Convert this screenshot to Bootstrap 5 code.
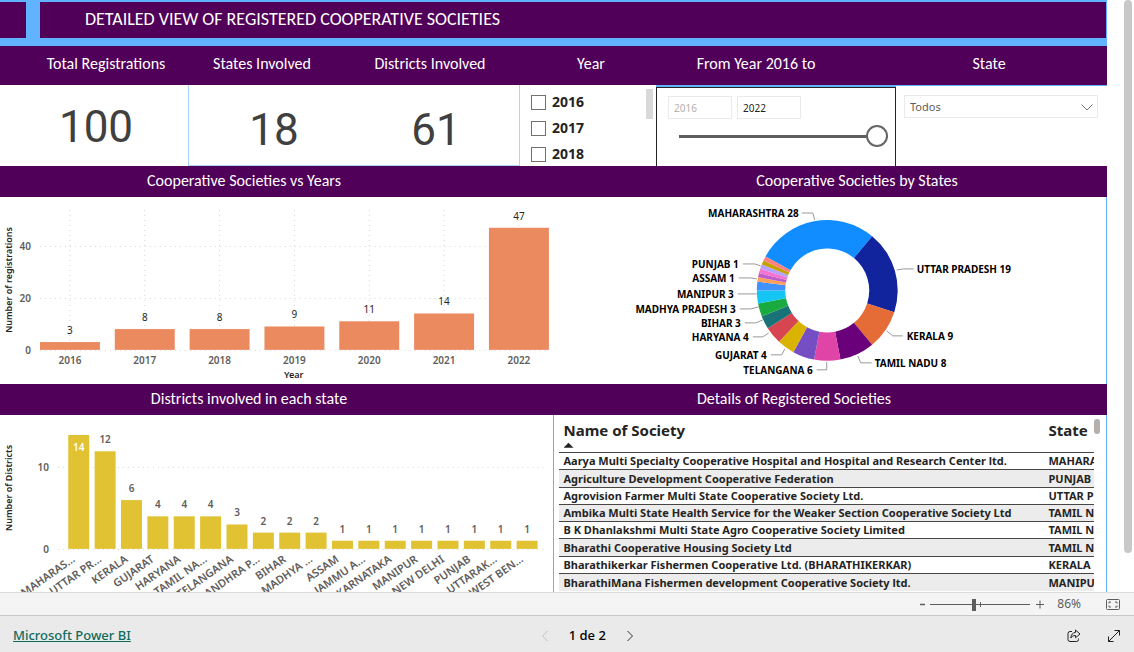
<!DOCTYPE html>
<html lang="es">
<head>
<meta charset="utf-8">
<meta name="viewport" content="width=device-width, initial-scale=1">
<title>Registered Cooperative Societies</title>
<link href="https://cdn.jsdelivr.net/npm/bootstrap@5.3.0/dist/css/bootstrap.min.css" rel="stylesheet">
<style>
  :root { --plum: #500059; --sky: #61b2ff; --ink: #252423; --soft: #605e5c; }
  body { font-family: "Noto Sans", "Open Sans", sans-serif; font-size: 13px; color: var(--ink); background: #fff; }
  .report { padding-right: 27px; }
  .report-scroll { top: 0; right: 2px; width: 8px; height: 553px; background: #c8c8c8; border-radius: 4px; }
  .head-font { font-family: Carlito, Lato, sans-serif; color: #fff; font-weight: 400; line-height: 20px; white-space: nowrap; }

  .title-bar { background: var(--sky); height: 46px; padding: 2px 1px 8px 0; gap: 14px; }
  .title-bar .corner { width: 26px; background: var(--plum); }
  .title-bar h1 { background: var(--plum); font-size: 18px; margin: 0; padding: 7px 45px; }

  .labels, .filters, .band { display: grid; }
  .labels { grid-template-columns: 212fr 100fr 236fr 86fr 244fr 222fr 7fr; background: var(--plum); height: 39px; }
  .labels h2, .band h2 { font-size: 16px; margin: 0; display: flex; justify-content: center; }
  .labels h2 { padding-top: 8px; min-width: 0; }
  .band { background: var(--plum); height: 31px; }
  .band h2 { padding-top: 5px; }
  .band-a { grid-template-columns: 488fr 119fr 500fr; }
  .band-b { grid-template-columns: 498fr 592fr 17fr; }

  .filters { grid-template-columns: 188fr 332fr 136fr 240fr 211fr; height: 81px; }
  .kpi { font-family: Roboto, sans-serif; font-size: 44px; line-height: 44px; color: #404040; }
  .kpi-single { padding: 20px 0 0 4px; }
  .kpi-pair { border: 1px solid #a9d3f9; border-top: 0; padding: 23px 2px 0 4px; }
  .year-list { padding: 6px 3px 0 11px; }
  .year-list label { font-size: 14px; font-weight: 700; line-height: 22px; }
  .year-list .form-check-input { width: 15px; height: 15px; border: 1px solid #77716c; border-radius: 0; margin: 0 6px 0 0; }
  .list-thumb { width: 7px; height: 30px; background: #d9d9d9; margin-top: -2px; }
  .range-box { border-top: 2px solid var(--sky); }
  .range-inner { border: 1px solid #252423; border-bottom: 0; height: 79px; padding: 8px 7px 0 11px; }
  .range-inner .year-box { width: 64px; height: 23px; border: 1px solid #eaeaea; border-radius: 0; font-size: 10px; padding: 0 5px; color: var(--ink); }
  .range-inner .year-box:disabled { background: #fff; color: #b3b0ad; }
  .range-inner .span-slider { margin: 6px 0 0 11px; width: calc(100% - 11px); height: 22px; appearance: none; background: none; display: block; }
  .span-slider::-webkit-slider-runnable-track { height: 3px; background: #605e5c; }
  .span-slider::-webkit-slider-thumb { appearance: none; width: 22px; height: 22px; margin-top: -10px; border: 2px solid #666; border-radius: 50%; background: #fff; }
  .state-box { padding: 9px 9px 0 8px; border-top: 1px solid var(--sky); }
  .state-box .form-select { height: 23px; border: 1px solid #eaeaea; border-radius: 0; padding: 0 24px 0 5px; font-size: 11px; line-height: 20px; color: var(--soft);
    background-image: url("data:image/svg+xml,%3Csvg xmlns='http://www.w3.org/2000/svg' viewBox='0 0 12 12'%3E%3Cpath d='M.5 3.5 6 9l5.500-5.500' fill='none' stroke='%23777'/%3E%3C/svg%3E"); background-size: 12px; background-position: right 4px center; }

  .split { display: grid; grid-template-columns: 550fr 557fr; }
  .edge { border-right: 1px solid var(--sky); }
  svg text { font-family: "Noto Sans", "Open Sans", sans-serif; }
  .chart { display: block; width: 100%; }
  .grid-line { stroke: #d4d4d4; stroke-dasharray: 1 4; }
  .tick { font-size: 10px; font-weight: 600; fill: var(--soft); }
  .slant { font-size: 11px; font-weight: 600; fill: var(--soft); }
  .value { font-size: 10px; fill: var(--ink); }
  .axis-name { font-size: 9px; font-weight: 600; fill: var(--ink); }
  .slice-name { font-size: 10px; font-weight: 700; fill: #000; }

  .table-pane { margin-left: 3px; border-left: 1px solid var(--sky); padding: 0 12px 0 5px; height: 177px; overflow: hidden; }
  .table-clip { overflow: hidden; }
  .societies { table-layout: fixed; width: 620px; font-size: 11px; font-weight: 700; line-height: 16px; white-space: nowrap; border-collapse: collapse; }
  .societies col.name-col { width: 485px; }
  .societies th { font-size: 15px; font-weight: 700; line-height: 20px; height: 38px; padding: 5px 5px 0; vertical-align: top; }
  .societies td { padding: 0 5px; }
  .societies tbody tr { height: 17px; border-top: 1px solid #484644; }
  .societies tbody tr:nth-child(4n+2) { height: 18px; }
  .societies tbody tr:nth-child(even) { background: #ececec; }
  .sort-mark { display: block; width: 10px; height: 5px; background: var(--ink); clip-path: polygon(50% 0, 100% 100%, 0 100%); margin-top: 3px; }
  .pane-thumb { top: 4px; right: 6px; width: 6px; height: 15px; border-radius: 3px; background: #b3b0ad; }

  .zoom-bar { height: 24px; background: #f4f4f4; border-top: 1px solid #dcdcdc; border-bottom: 1px solid #c8c8c8; padding-right: 14px; color: var(--soft); }
  .plain-btn { border: 0; background: none; padding: 0; color: inherit; line-height: 16px; display: inline-flex; align-items: center; justify-content: center; }
  .zoom-slider { appearance: none; width: 100px; height: 12px; margin: 0 6px 0 4px; background: linear-gradient(#605e5c, #605e5c) 50px 50% / 1px 5px no-repeat; }
  .zoom-slider::-webkit-slider-runnable-track { height: 1px; background: #605e5c; }
  .zoom-slider::-webkit-slider-thumb { appearance: none; width: 4px; height: 12px; margin-top: -5px; border: 0; border-radius: 0; background: #605e5c; }
  .zoom-pct { font-size: 12px; margin: 0 25px 0 13px; }
  .foot { display: grid; grid-template-columns: 13fr auto 12fr; height: 36px; background: #eaeaea; padding: 0 13px; align-items: center; }
  .foot a { font-size: 13px; font-weight: 500; color: #0f6b5c; text-decoration: underline; }
  .foot .page-no { font-size: 13px; font-weight: 500; color: #000; }
</style>
</head>
<body class="d-flex flex-column vh-100 overflow-hidden">
<main class="report position-relative flex-grow-1 overflow-hidden">
  <header class="title-bar d-flex">
    <div class="corner"></div>
    <h1 class="head-font flex-grow-1">DETAILED VIEW OF REGISTERED COOPERATIVE SOCIETIES</h1>
  </header>

  <section class="labels">
    <h2 class="head-font">Total Registrations</h2>
    <h2 class="head-font">States Involved</h2>
    <h2 class="head-font">Districts Involved</h2>
    <h2 class="head-font">Year</h2>
    <h2 class="head-font">From Year 2016 to</h2>
    <h2 class="head-font">State</h2>
  </section>

  <section class="filters">
    <div class="kpi kpi-single text-center">100</div>
    <div class="kpi kpi-pair row g-0 text-center"><div class="col-6">18</div><div class="col-6">61</div></div>
    <div class="year-list d-flex justify-content-between">
      <div class="d-flex flex-column gap-1">
        <div class="d-flex align-items-center"><input class="form-check-input" type="checkbox" id="y16"><label for="y16">2016</label></div>
        <div class="d-flex align-items-center"><input class="form-check-input" type="checkbox" id="y17"><label for="y17">2017</label></div>
        <div class="d-flex align-items-center"><input class="form-check-input" type="checkbox" id="y18"><label for="y18">2018</label></div>
      </div>
      <div class="list-thumb"></div>
    </div>
    <div class="range-box">
      <div class="range-inner">
        <div class="d-flex" style="gap:5px">
          <input class="year-box" type="text" value="2016" aria-label="From year" disabled>
          <input class="year-box" type="text" value="2022" aria-label="To year">
        </div>
        <input class="span-slider" type="range" min="2016" max="2022" value="2022" aria-label="Last year">
      </div>
    </div>
    <div class="state-box">
      <select class="form-select" aria-label="State"><option>Todos</option></select>
    </div>
  </section>

  <section class="band band-a">
    <h2 class="head-font">Cooperative Societies vs Years</h2><span></span>
    <h2 class="head-font">Cooperative Societies by States</h2>
  </section>
  <section class="split edge">
    <svg class="chart" id="years" viewBox="0 197 550 187" role="img" aria-label="Cooperative Societies vs Years"></svg>
    <svg class="chart" id="states" viewBox="550 197 557 187" role="img" aria-label="Cooperative Societies by States"></svg>
  </section>

  <section class="band band-b">
    <h2 class="head-font">Districts involved in each state</h2>
    <h2 class="head-font">Details of Registered Societies</h2>
  </section>
  <section class="split edge">
    <svg class="chart" id="districts" viewBox="0 415 550 177" role="img" aria-label="Districts involved in each state"></svg>
    <div class="table-pane position-relative">
      <div class="table-clip">
        <table class="societies">
          <colgroup><col class="name-col"><col></colgroup>
          <thead><tr><th>Name of Society<span class="sort-mark"></span></th><th>State</th></tr></thead>
          <tbody>
            <tr><td>Aarya Multi Specialty Cooperative Hospital and Hospital and Research Center ltd.</td><td>MAHARASHTRA</td></tr>
            <tr><td>Agriculture Development Cooperative Federation</td><td>PUNJAB</td></tr>
            <tr><td>Agrovision Farmer Multi State Cooperative Society Ltd.</td><td>UTTAR PRADESH</td></tr>
            <tr><td>Ambika Multi State Health Service for the Weaker Section Cooperative Society Ltd</td><td>TAMIL NADU</td></tr>
            <tr><td>B K Dhanlakshmi Multi State Agro Cooperative Society Limited</td><td>TAMIL NADU</td></tr>
            <tr><td>Bharathi Cooperative Housing Society Ltd</td><td>TAMIL NADU</td></tr>
            <tr><td>Bharathikerkar Fishermen Cooperative Ltd. (BHARATHIKERKAR)</td><td>KERALA</td></tr>
            <tr><td>BharathiMana Fishermen development Cooperative Society ltd.</td><td>MANIPUR</td></tr>
          </tbody>
        </table>
      </div>
      <div class="pane-thumb position-absolute"></div>
    </div>
  </section>
  <div class="report-scroll position-absolute"></div>
</main>

<div class="zoom-bar d-flex align-items-center justify-content-end flex-shrink-0">
  <button class="plain-btn" type="button" aria-label="Zoom out"><svg width="6" height="12"><path d="M0 6.500h5" stroke="#605e5c" stroke-width="1.500"/></svg></button>
  <input class="zoom-slider" type="range" min="0" max="100" value="43" aria-label="Zoom">
  <button class="plain-btn" type="button" aria-label="Zoom in"><svg width="8" height="12"><path d="M0 6.500h8M4 2.500v8" stroke="#605e5c"/></svg></button>
  <span class="zoom-pct">86%</span>
  <button class="plain-btn" type="button" aria-label="Fit to page"><svg width="14" height="11" fill="none" stroke="#605e5c"><rect x=".5" y=".5" width="13" height="10" rx="1"/><path d="M3 4.500v-1.500h2M9 3h2v1.500M11 6.500v1.500h-2M5 8h-2v-1.500"/></svg></button>
</div>

<footer class="foot flex-shrink-0">
  <div class="pt-1"><a href="#">Microsoft Power BI</a></div>
  <nav class="d-flex align-items-center pt-1" aria-label="Pages">
    <button class="plain-btn" type="button" aria-label="Previous page"><svg width="8" height="12" fill="none" stroke="#c0c0c0"><path d="M6.500 1 1.500 6l5 5"/></svg></button>
    <span class="page-no px-3 mx-1">1 de 2</span>
    <button class="plain-btn" type="button" aria-label="Next page"><svg width="8" height="12" fill="none" stroke="#333"><path d="m1.500 1 5 5-5 5"/></svg></button>
  </nav>
  <div class="d-flex justify-content-end align-items-center pt-1" style="gap:26px">
    <button class="plain-btn" type="button" aria-label="Share"><svg width="14" height="14" fill="none" stroke="#222" stroke-linejoin="round"><path d="M5 2.500H3a2 2 0 0 0-2 2v6a2 2 0 0 0 2 2h6.500a2 2 0 0 0 2-2V9.500"/><path d="M8.500 1 13 5 8.500 8.800V6.500C6.300 6.500 4.800 7.300 3.800 9 4 5.500 5.800 3.700 8.500 3.400Z"/></svg></button>
    <button class="plain-btn" type="button" aria-label="Full screen"><svg width="14" height="14" fill="none" stroke="#222"><path d="M1.500 12.500 12.500 1.500M7.500 1.500h5v5M1.500 7.500v5h5"/></svg></button>
  </div>
</footer>

<script src="https://cdn.jsdelivr.net/npm/bootstrap@5.3.0/dist/js/bootstrap.bundle.min.js"></script>
<script>
  const line = (x1, y1, x2, y2) => `<line class="grid-line" x1="${x1}" y1="${y1}" x2="${x2}" y2="${y2}"/>`;
  const label = (cls, x, y, s, anchor = 'middle', extra = '') => `<text class="${cls}" x="${x}" y="${y}" text-anchor="${anchor}" ${extra}>${s}</text>`;

  // Registrations per year
  const years = [[2016, 3], [2017, 8], [2018, 8], [2019, 9], [2020, 11], [2021, 14], [2022, 47]];
  let out = '';
  [0, 20, 40].forEach(v => {
    const y = 350.5 - v * 2.6;
    out += line(40, y, 550, y) + label('tick', 31, y + 4, v, 'end');
  });
  years.forEach(([year, n], i) => {
    const x = 40 + i * 74.9, h = n * 2.6;
    out += line(x + 30, 210, x + 30, 350)
      + `<rect x="${x}" y="${350 - h}" width="60" height="${h}" fill="#eb895f"/>`
      + label('value', x + 30, 350 - h - 8, n) + label('tick', x + 30, 364, year);
  });
  out += label('axis-name', 294, 378, 'Year')
    + label('axis-name', 12, 280, 'Number of registrations', 'middle', 'transform="rotate(-90 12 280)"');
  document.getElementById('years').innerHTML = out;

  // Share of each state
  const slices = [[28, '#118DFF'], [19, '#12239E'], [9, '#E66C37'], [8, '#6B007B'], [6, '#E044A7'], [5, '#744EC2'],
    [4, '#D9B300'], [4, '#D64550'], [3, '#197278'], [3, '#1AAB40'], [3, '#15C6F4'], [2, '#4092FF'], [1, '#FFA058'],
    [1, '#BE5DC9'], [1, '#F472D0'], [1, '#B5A1FF'], [1, '#C4A200'], [1, '#FF8080']];
  const point = (deg, r) => {
    const a = deg * Math.PI / 180;
    return (827.5 + r * Math.sin(a)).toFixed(2) + ' ' + (290.5 - r * Math.cos(a)).toFixed(2);
  };
  let from = -61.2;
  out = '';
  slices.forEach(([n, fill]) => {
    const to = from + n * 3.6;
    out += `<path fill="${fill}" d="M${point(from, 70.5)}A70.5 70.5 0 0 1 ${point(to, 70.5)}L${point(to, 42)}A42 42 0 0 0 ${point(from, 42)}Z"/>`;
    from = to;
  });
  [['MAHARASHTRA 28', 799, 217, 'end', '802,213 813,213 815,220'],
   ['PUNJAB 1', 739, 268, 'end', '743,264 755,264 761,266'],
   ['ASSAM 1', 735, 282, 'end', '739,278 751,278 757,279'],
   ['MANIPUR 3', 734, 298, 'end', '738,294 750,294 757,294'],
   ['MADHYA PRADESH 3', 736, 313, 'end', '740,309 751,309 759,307'],
   ['BIHAR 3', 741, 327, 'end', '745,323 756,323 763,320'],
   ['HARYANA 4', 749, 341, 'end', '753,337 763,337 769,333'],
   ['GUJARAT 4', 767, 359, 'end', '771,355 782,355 785,349'],
   ['TELANGANA 6', 813, 374, 'end', '817,370 827,370 827,362'],
   ['UTTAR PRADESH 19', 917, 273, 'start', '914,269 904,269 897,270'],
   ['KERALA 9', 907, 340, 'start', '903,336 893,336 887,331'],
   ['TAMIL NADU 8', 875, 367, 'start', '872,363 861,363 858,356']
  ].forEach(([s, x, y, anchor, pts]) => {
    out += label('slice-name', x, y, s, anchor) + `<polyline points="${pts}" fill="none" stroke="#999"/>`;
  });
  document.getElementById('states').innerHTML = out;

  // Districts per state
  const districts = [['MAHARAS…', 14], ['UTTAR PR…', 12], ['KERALA', 6], ['GUJARAT', 4], ['HARYANA', 4], ['TAMIL NA…', 4],
    ['TELANGANA', 3], ['ANDHRA P…', 2], ['BIHAR', 2], ['MADHYA …', 2], ['ASSAM', 1], ['JAMMU A…', 1], ['KARNATAKA', 1],
    ['MANIPUR', 1], ['NEW DELHI', 1], ['PUNJAB', 1], ['UTTARAK…', 1], ['WEST BEN…', 1]];
  out = line(58, 549.5, 548, 549.5) + line(58, 467.5, 548, 467.5)
    + label('tick', 49, 553, 0, 'end') + label('tick', 49, 471, 10, 'end');
  districts.forEach(([name, n], i) => {
    const x = 68.3 + i * 26.4, c = x + 10.5, h = n * 8.14;
    out += `<rect x="${x}" y="${549 - h}" width="21" height="${h}" fill="#e0c232"/>`
      + label('tick', c, i ? 549 - h - 8 : 451, n, 'middle', i ? '' : 'style="fill:#fff"')
      + label('slant', c - 3, 561, name, 'end', `transform="rotate(-35 ${c - 3} 561)"`);
  });
  out += label('axis-name', 12, 488, 'Number of Districts', 'middle', 'transform="rotate(-90 12 488)"');
  document.getElementById('districts').innerHTML = out;
</script>
</body>
</html>
